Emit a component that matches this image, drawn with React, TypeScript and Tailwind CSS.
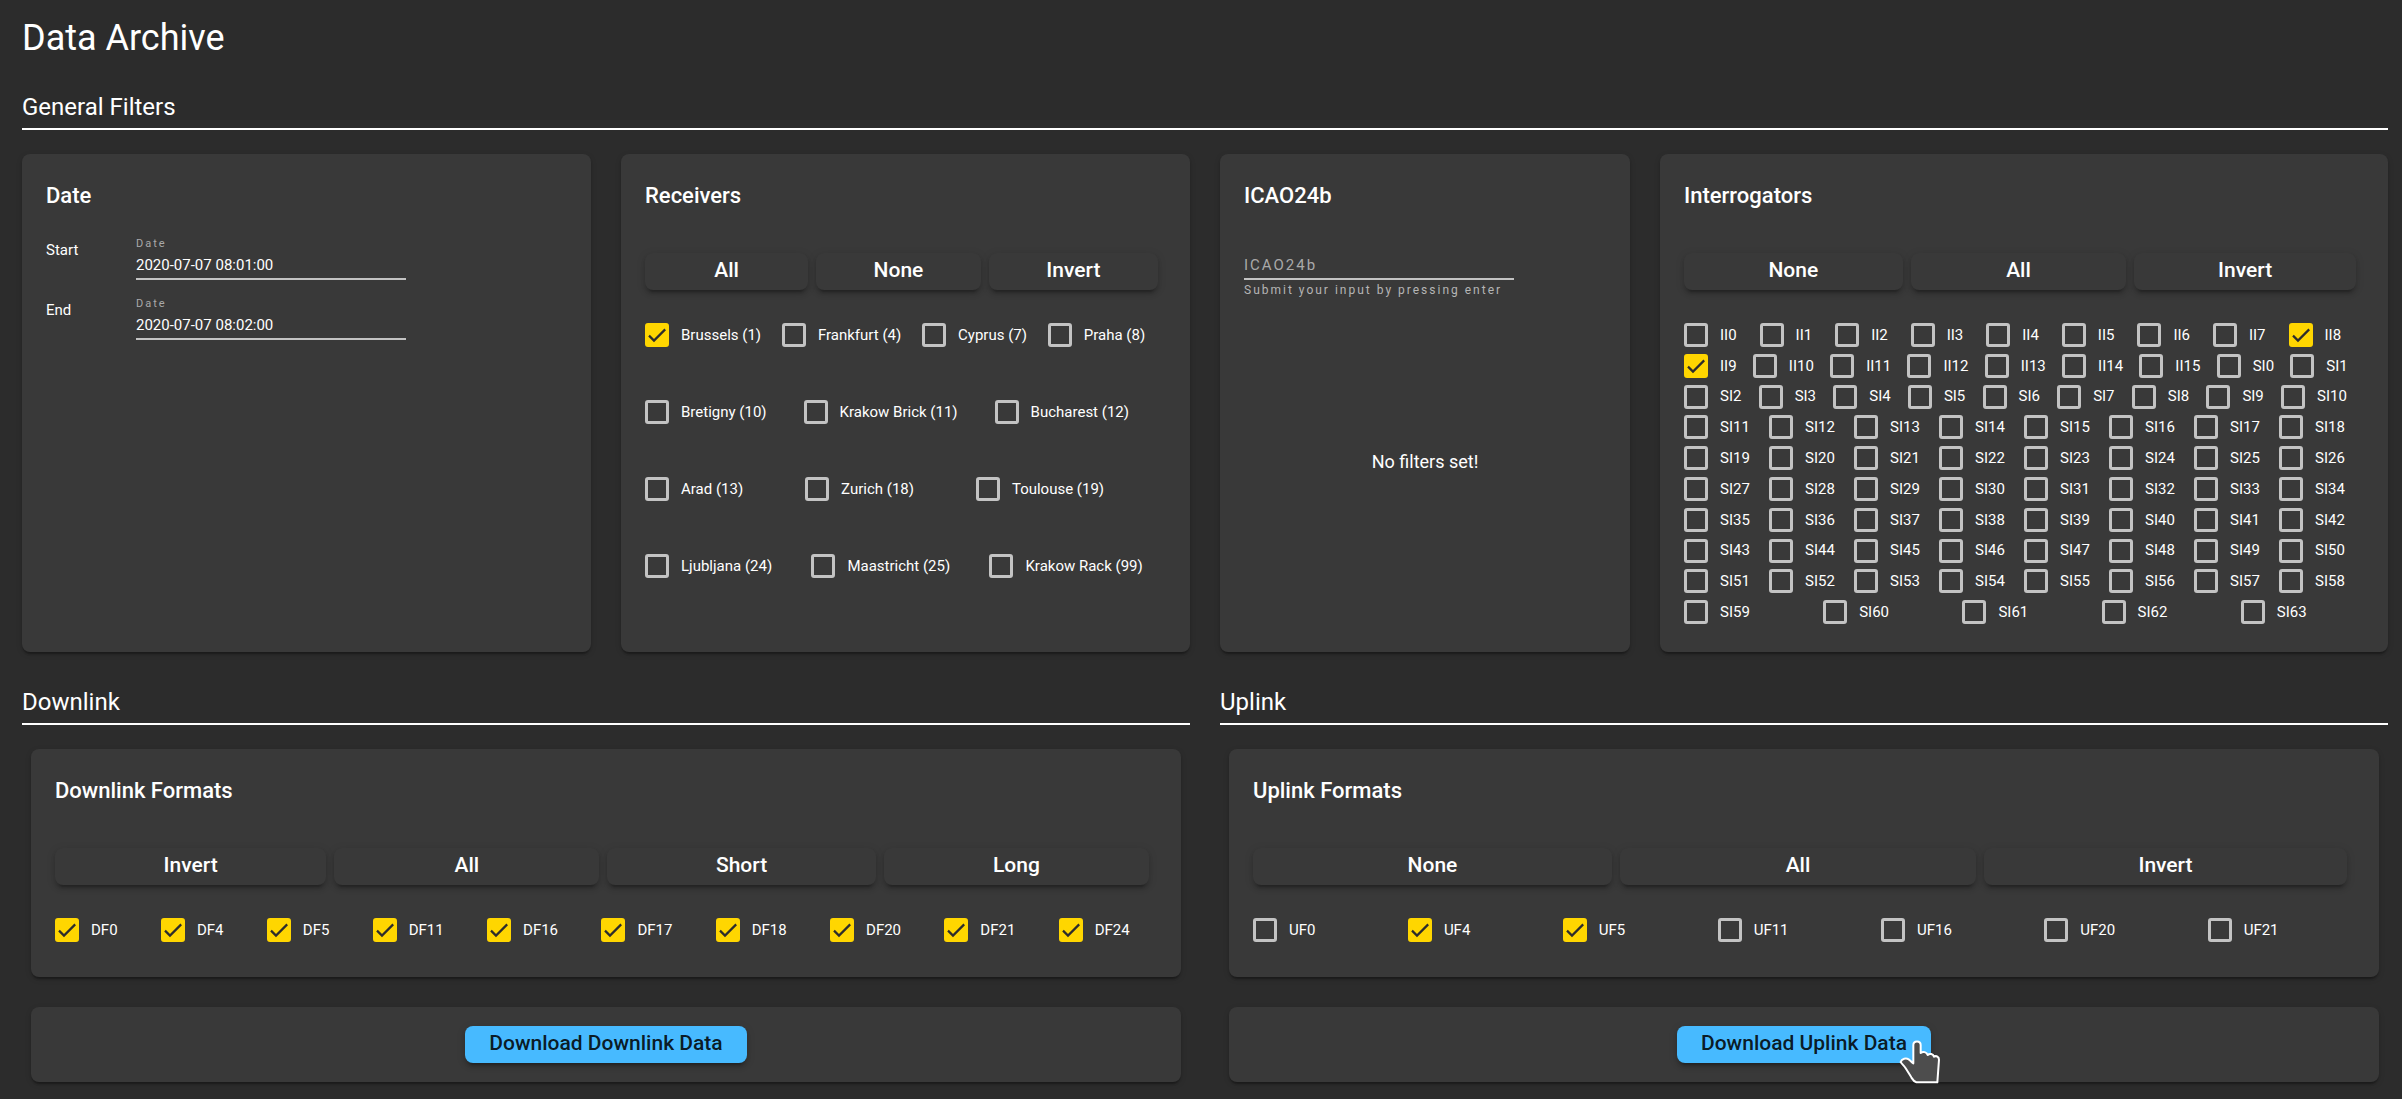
import { useState, type ReactNode } from "react";

const receivers = [
  "Brussels (1)",
  "Frankfurt (4)",
  "Cyprus (7)",
  "Praha (8)",
  "Bretigny (10)",
  "Krakow Brick (11)",
  "Bucharest (12)",
  "Arad (13)",
  "Zurich (18)",
  "Toulouse (19)",
  "Ljubljana (24)",
  "Maastricht (25)",
  "Krakow Rack (99)",
];

const interrogators = [
  ...Array.from({ length: 16 }, (_, i) => `II${i}`),
  ...Array.from({ length: 64 }, (_, i) => `SI${i}`),
];

const downlinkFormats = [0, 4, 5, 11, 16, 17, 18, 20, 21, 24].map((n) => `DF${n}`);
const downlinkShort = ["DF0", "DF4", "DF5", "DF11"];
const uplinkFormats = [0, 4, 5, 11, 16, 20, 21].map((n) => `UF${n}`);

const cardClass =
  "rounded-lg bg-[#393939] shadow-[0_4px_2px_-2px_rgba(0,0,0,0.2),0_2px_2px_rgba(0,0,0,0.14),0_2px_6px_rgba(0,0,0,0.12)]";
const raisedClass =
  "h-[37px] cursor-pointer rounded-lg pb-[2px] text-[21px] font-medium shadow-[0_6px_2px_-4px_rgba(0,0,0,0.2),0_4px_4px_rgba(0,0,0,0.14),0_2px_10px_rgba(0,0,0,0.12)]";

function SectionTitle({ children }: { children: ReactNode }) {
  return (
    <h2 className="mb-6 border-b-2 border-white pb-1 text-2xl leading-[34px]">{children}</h2>
  );
}

function Card({ title, children }: { title: string; children: ReactNode }) {
  return (
    <section className={`flex flex-col p-6 ${cardClass}`}>
      <h3 className="text-[22px] leading-9 font-medium">{title}</h3>
      {children}
    </section>
  );
}

function Checkbox({
  label,
  checked,
  onChange,
}: {
  label: string;
  checked: boolean;
  onChange: () => void;
}) {
  return (
    <label className="flex h-[30px] flex-auto cursor-pointer items-center gap-3 pr-4 text-[15px] whitespace-nowrap last:pr-0">
      <span className="grid size-6 shrink-0">
        <input
          type="checkbox"
          checked={checked}
          onChange={onChange}
          className="peer col-start-1 row-start-1 size-6 cursor-pointer appearance-none rounded-[3px] border-3 border-[#c3c3c3] checked:border-[#ffd600] checked:bg-[#ffd600]"
        />
        <svg
          viewBox="0 0 24 24"
          aria-hidden="true"
          className="pointer-events-none invisible col-start-1 row-start-1 size-6 peer-checked:visible"
        >
          <path d="M4 12.6 L9 17.6 L20.2 6.4" fill="none" stroke="#2c2c2c" strokeWidth="2.2" />
        </svg>
      </span>
      {label}
    </label>
  );
}

type Action = "All" | "None" | "Invert" | "Short" | "Long";

function CheckboxGroup({
  options,
  initial,
  actions,
  columns,
  listClass,
}: {
  options: string[];
  initial: string[];
  actions: Action[];
  columns: string;
  listClass: string;
}) {
  const [selected, setSelected] = useState<string[]>(initial);

  const apply = (action: Action) => {
    if (action === "All") setSelected(options);
    if (action === "None") setSelected([]);
    if (action === "Invert") setSelected(options.filter((o) => !selected.includes(o)));
    if (action === "Short") setSelected(options.filter((o) => downlinkShort.includes(o)));
    if (action === "Long") setSelected(options.filter((o) => !downlinkShort.includes(o)));
  };

  const toggle = (option: string) =>
    setSelected(
      selected.includes(option) ? selected.filter((o) => o !== option) : [...selected, option],
    );

  return (
    <>
      <div className={`mt-[39px] mb-[30px] grid gap-2 pr-2 ${columns}`}>
        {actions.map((action) => (
          <button
            key={action}
            type="button"
            onClick={() => apply(action)}
            className={`bg-[#393939] text-white ${raisedClass}`}
          >
            {action}
          </button>
        ))}
      </div>
      <div className={`flex flex-wrap content-stretch items-start ${listClass}`}>
        {options.map((option) => (
          <Checkbox
            key={option}
            label={option}
            checked={selected.includes(option)}
            onChange={() => toggle(option)}
          />
        ))}
      </div>
    </>
  );
}

function DateRow({ name, id, value }: { name: string; id: string; value: string }) {
  return (
    <div className="flex text-[15px]">
      <span className="w-[90px] leading-7">{name}</span>
      <div className="flex w-[270px] flex-col">
        <label htmlFor={id} className="text-[11px] leading-4 tracking-[2px] text-[#a9a9a9]">
          Date
        </label>
        <input
          id={id}
          type="text"
          defaultValue={value}
          className="h-7 border-b-2 border-[#c3c3c3] bg-transparent outline-none"
        />
      </div>
    </div>
  );
}

function HandCursor() {
  return (
    <svg
      viewBox="0 0 126 132"
      aria-hidden="true"
      className="pointer-events-none absolute -right-[10px] -bottom-[21px] h-11 w-[42px]"
    >
      <path
        d="M43 70 L43 15 C43 1 65 1 65 15 L65 39 C72 33 83 36 86 45 C92 39 103 42 105 50 C112 46 120 50 120 59 L115 127 L52 127 C44 125 41 118 37 112 L20 85 C16 77 9 73 5 66 C8 55 22 54 29 58 C35 62 38 67 43 70 Z"
        fill="#4d4d4d"
        stroke="#ffffff"
        strokeWidth="6"
        strokeLinejoin="round"
      />
    </svg>
  );
}

function DownloadCard({ label, children }: { label: string; children?: ReactNode }) {
  return (
    <div className={`flex justify-center py-[19px] ${cardClass}`}>
      <div className="relative flex">
        <button type="button" className={`bg-[#47baff] px-6 text-black/87 ${raisedClass}`}>
          {label}
        </button>
        {children}
      </div>
    </div>
  );
}

export default function App() {
  return (
    <main className="min-h-screen bg-[#2c2c2c] pt-4 pr-[14px] pb-[17px] pl-[22px] font-['Roboto',sans-serif] text-white">
      <h1 className="mb-[30px] text-4xl leading-[44px]">Data Archive</h1>

      <SectionTitle>General Filters</SectionTitle>
      <div className="grid grid-cols-[569fr_569fr_410fr_728fr] gap-[30px]">
        <Card title="Date">
          <div className="mt-[22px] flex flex-col gap-4">
            <DateRow name="Start" id="date-start" value="2020-07-07 08:01:00" />
            <DateRow name="End" id="date-end" value="2020-07-07 08:02:00" />
          </div>
        </Card>

        <Card title="Receivers">
          <CheckboxGroup
            options={receivers}
            initial={["Brussels (1)"]}
            actions={["All", "None", "Invert"]}
            columns="grid-cols-[164fr_165fr_170fr]"
            listClass="flex-1"
          />
        </Card>

        <Card title="ICAO24b">
          <div className="mt-[38px] flex w-[270px] flex-col">
            <input
              id="icao"
              type="text"
              aria-label="ICAO24b"
              aria-describedby="icao-hint"
              placeholder="ICAO24b"
              className="h-7 border-b-2 border-[#c3c3c3] bg-transparent text-[15px] tracking-[2px] outline-none placeholder:text-[#a9a9a9]"
            />
            <p id="icao-hint" className="text-xs leading-5 tracking-[2px] whitespace-nowrap text-[#b5b5b5]">
              Submit your input by pressing enter
            </p>
          </div>
          <p className="flex flex-1 items-center justify-center pb-1 text-lg">No filters set!</p>
        </Card>

        <Card title="Interrogators">
          <CheckboxGroup
            options={interrogators}
            initial={["II8", "II9"]}
            actions={["None", "All", "Invert"]}
            columns="grid-cols-[218fr_215fr_221fr]"
            listClass="min-h-[308px] flex-1"
          />
        </Card>
      </div>

      <div className="mt-[33px] grid grid-cols-2 gap-[30px]">
        <section>
          <SectionTitle>Downlink</SectionTitle>
          <div className="flex flex-col gap-[30px] px-[9px]">
            <Card title="Downlink Formats">
              <CheckboxGroup
                options={downlinkFormats}
                initial={downlinkFormats}
                actions={["Invert", "All", "Short", "Long"]}
                columns="grid-cols-[272fr_266fr_269fr_266fr]"
                listClass="pb-2"
              />
            </Card>
            <DownloadCard label="Download Downlink Data" />
          </div>
        </section>

        <section>
          <SectionTitle>Uplink</SectionTitle>
          <div className="flex flex-col gap-[30px] px-[9px]">
            <Card title="Uplink Formats">
              <CheckboxGroup
                options={uplinkFormats}
                initial={["UF4", "UF5"]}
                actions={["None", "All", "Invert"]}
                columns="grid-cols-[359fr_356fr_363fr]"
                listClass="pb-2"
              />
            </Card>
            <DownloadCard label="Download Uplink Data">
              <HandCursor />
            </DownloadCard>
          </div>
        </section>
      </div>
    </main>
  );
}
